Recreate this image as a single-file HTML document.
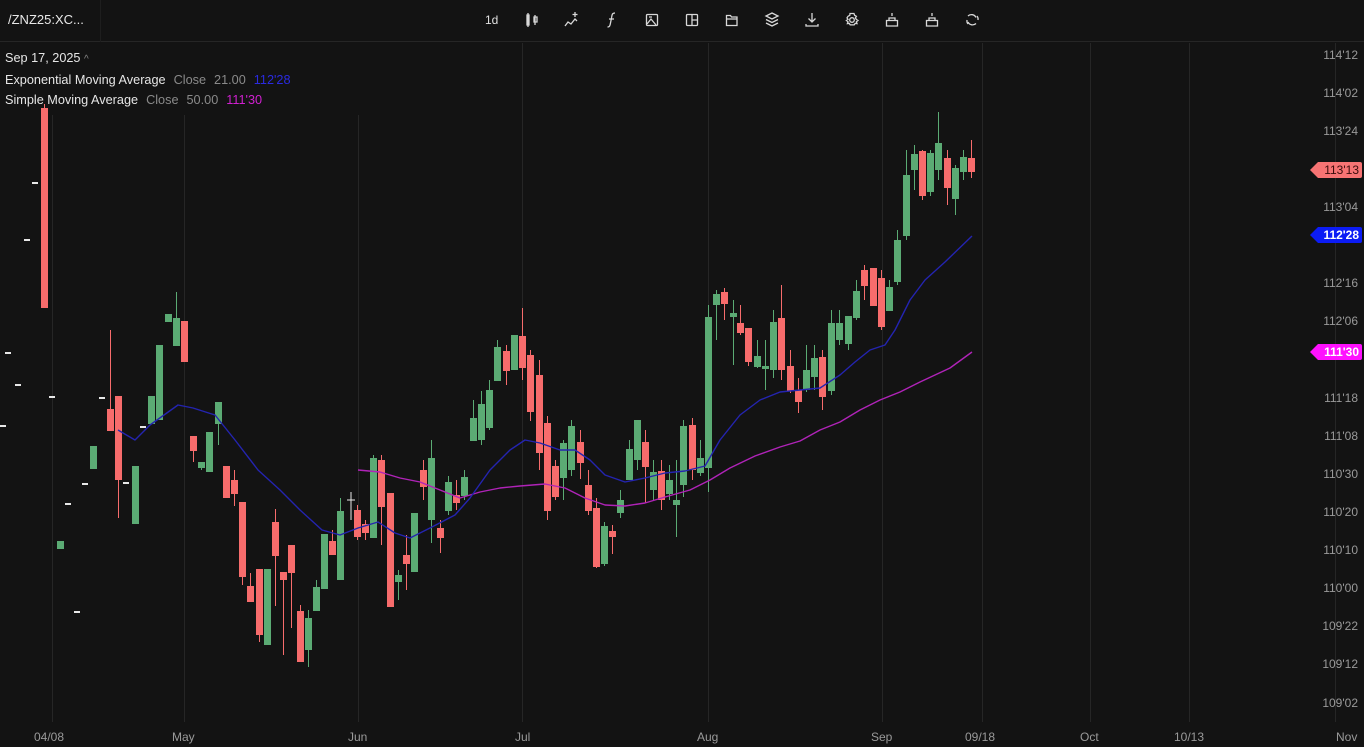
<!DOCTYPE html>
<html><head><meta charset="utf-8"><style>
html,body{margin:0;padding:0;background:#131313;width:1364px;height:747px;overflow:hidden;font-family:"Liberation Sans",sans-serif;}
#hdr{position:absolute;left:0;top:0;width:1364px;height:42px;border-bottom:1px solid #262626;box-sizing:border-box;}
#sym{position:absolute;left:8px;top:12px;color:#e8e8e8;font-size:13px;}
#sep{position:absolute;left:100px;top:0;width:1px;height:42px;background:#1e1e1e}
.lg{position:absolute;left:5px;font-size:12.7px;color:#e6e6e6;white-space:nowrap}
.lg .g{color:#8a8a8a;margin-left:8px}
.ax{position:absolute;font-size:12px;color:#9a9a9a}
.pl{right:6px}
.tag{position:absolute;left:1318px;width:44px;height:16px;font-size:12px;line-height:16px;text-align:right;padding-right:3px;box-sizing:border-box;border-radius:0 2px 2px 0}
</style></head><body>
<div id="hdr"><div id="sym">/ZNZ25:XC...</div><div id="sep"></div>
<svg width="1364" height="42" style="position:absolute;left:0;top:0" fill="none" stroke="#d8d8d8" stroke-width="1.3">
<text x="485" y="24" fill="#e0e0e0" stroke="none" font-size="12" font-family="Liberation Sans">1d</text>
<path d="M528 13v14M527 15h2v10h-2zM535 15v10M534 17h3v5h-3z"/>
<path d="M565 26l3-4 3 2 4-5 2 2M575 12v5M572.5 14.5h5"/>
<path d="M615 13c-3 0-3 2-3.5 5l-1 5c-.5 3-1 4-3 4M609 19h5"/>
<rect x="646.5" y="14.5" width="11" height="11" rx="1"/><path d="M647 24l4-5 5 6M649 17h3"/>
<rect x="686.5" y="14.5" width="11" height="11" rx="1"/><path d="M692 14.5v11M692 20h5.5"/>
<path d="M726.5 15.5h4l1 1.5h5.5v8.5h-10.5zM726.5 19h11"/>
<path d="M772 13l6 3-6 3-6-3zM766 19.5l6 3 6-3M766 23l6 3 6-3"/>
<path d="M812 13v9M808.5 18.5l3.5 3.5 3.5-3.5M806 24v2h12v-2"/>
<circle cx="852" cy="20" r="2.3"/><path d="M850 13.5h4l.6 1.8 1.8 1-1 1.6 1 1.6 1.6 1-1.6 1.3.6 1.8-1.8-.3-1 1.6h-4l-1-1.6-1.8.3.6-1.8-1.6-1.3 1.6-1-1-1.6 1-1.6 1.8-1z"/>
<path d="M886.5 20.5h11v5.5h-11zM889 20.5v-2.5h6v2.5M892 13v3"/>
<path d="M926.5 20.5h11v5.5h-11zM929 20.5v-2.5h6v2.5M932 13v3"/>
<path d="M968 16a5 5 0 0 1 8 1.5M976 23.5a5 5 0 0 1-8-1.5M968 24a5 5 0 0 1-1-4M977 16a5 5 0 0 1 1 4"/>
</svg></div>

<div class="lg" style="top:51px">Sep 17, 2025 <span style="color:#888;font-size:10px">^</span></div>
<div class="lg" style="top:73px">Exponential Moving Average<span class="g">Close</span><span class="g">21.00</span><span style="color:#2a2ae0;margin-left:8px">112'28</span></div>
<div class="lg" style="top:93px">Simple Moving Average<span class="g">Close</span><span class="g">50.00</span><span style="color:#d020d0;margin-left:8px">111'30</span></div>

<svg id="ch" width="1364" height="747" style="position:absolute;left:0;top:0;z-index:-0" ></svg>

<div class="ax pl" style="top:48px">114'12</div>
<div class="ax pl" style="top:86px">114'02</div>
<div class="ax pl" style="top:124px">113'24</div>
<div class="ax pl" style="top:200px">113'04</div>
<div class="ax pl" style="top:276px">112'16</div>
<div class="ax pl" style="top:314px">112'06</div>
<div class="ax pl" style="top:391px">111'18</div>
<div class="ax pl" style="top:429px">111'08</div>
<div class="ax pl" style="top:467px">110'30</div>
<div class="ax pl" style="top:505px">110'20</div>
<div class="ax pl" style="top:543px">110'10</div>
<div class="ax pl" style="top:581px">110'00</div>
<div class="ax pl" style="top:619px">109'22</div>
<div class="ax pl" style="top:657px">109'12</div>
<div class="ax pl" style="top:696px">109'02</div>
<div class="tag" style="top:162px;background:#f77474;color:#3a0c0c">113'13<span style="position:absolute;left:-8px;top:0;width:0;height:0;border-top:8px solid transparent;border-bottom:8px solid transparent;border-right:8px solid #f77474"></span></div>
<div class="tag" style="top:227px;background:#0c1cf5;color:#fff;font-weight:bold">112'28<span style="position:absolute;left:-8px;top:0;width:0;height:0;border-top:8px solid transparent;border-bottom:8px solid transparent;border-right:8px solid #0c1cf5"></span></div>
<div class="tag" style="top:344px;background:#ff10ff;color:#fff;font-weight:bold">111'30<span style="position:absolute;left:-8px;top:0;width:0;height:0;border-top:8px solid transparent;border-bottom:8px solid transparent;border-right:8px solid #ff10ff"></span></div>

<div class="ax" style="top:730px;left:34px">04/08</div>
<div class="ax" style="top:730px;left:172px">May</div>
<div class="ax" style="top:730px;left:348px">Jun</div>
<div class="ax" style="top:730px;left:515px">Jul</div>
<div class="ax" style="top:730px;left:697px">Aug</div>
<div class="ax" style="top:730px;left:871px">Sep</div>
<div class="ax" style="top:730px;left:965px">09/18</div>
<div class="ax" style="top:730px;left:1080px">Oct</div>
<div class="ax" style="top:730px;left:1174px">10/13</div>
<div class="ax" style="top:730px;left:1336px">Nov</div>

<script>
var s='';
var gl=[[52,115],[184,115],[358,115],[522,43],[708,43],[882,43],[982,43],[1090,43],[1189,43],[1335,43]];
gl.forEach(function(g){s+='<line x1="'+(g[0]+.5)+'" y1="'+g[1]+'" x2="'+(g[0]+.5)+'" y2="722" stroke="#262626"/>';});
var G='#5bab74',R='#f76c6c';
var c=[[44,108,308,104,308,R],[60,541,549,541,549,G],[93,446,469,446,469,G],[110,409,431,330,431,R],[118,396,480,396,518,R],[135,466,524,466,524,G],[151,396,424,396,424,G],[159,345,420,345,420,G],[168,314,322,314,322,G],[176,318,346,292,346,G],[184,321,362,321,362,R],[193,436,451,436,462,R],[201,462,468,462,470,G],[209,432,472,432,472,G],[218,402,424,402,445,G],[226,466,498,466,498,R],[234,480,494,470,506,R],[242,502,577,502,585,R],[250,586,602,573,602,R],[259,569,635,569,642,R],[267,569,645,569,645,G],[275,522,556,509,606,R],[283,572,580,572,655,R],[291,545,573,545,628,R],[300,611,662,605,662,R],[308,618,650,610,667,G],[316,587,611,580,611,G],[324,534,589,534,589,G],[332,541,555,530,555,R],[340,511,580,498,580,G],[357,510,537,505,540,R],[365,524,533,520,540,R],[373,458,538,455,538,G],[381,460,507,455,545,R],[390,493,607,493,607,R],[398,575,582,570,600,G],[406,555,564,535,590,R],[414,513,572,513,572,G],[423,470,487,460,500,R],[431,458,520,440,543,G],[440,528,538,520,553,R],[448,482,511,476,515,G],[456,495,503,480,510,R],[464,477,496,470,500,G],[473,418,441,400,441,G],[481,404,440,391,445,G],[489,390,428,380,430,G],[497,347,381,340,381,G],[506,351,371,345,385,R],[514,335,370,335,370,G],[522,336,368,308,380,R],[530,355,412,350,421,R],[539,375,453,360,470,R],[547,423,511,416,520,R],[555,466,497,460,500,R],[563,443,478,440,500,G],[571,426,470,420,476,G],[580,442,463,430,479,R],[588,485,511,470,515,R],[596,508,567,498,568,R],[604,526,564,522,566,G],[612,531,537,525,554,R],[620,500,513,490,518,G],[629,449,480,440,480,G],[637,420,460,420,470,G],[645,442,467,430,503,R],[653,472,490,460,500,G],[661,471,500,460,510,R],[669,480,494,465,500,G],[676,500,505,460,537,G],[683,426,485,420,497,G],[692,425,470,418,480,R],[700,458,473,440,476,G],[708,317,468,305,492,G],[716,294,305,290,340,G],[724,292,304,288,320,R],[733,313,317,300,365,G],[740,323,333,305,335,R],[748,328,362,328,366,R],[757,356,367,340,368,G],[765,366,369,340,390,G],[773,322,370,310,378,G],[781,318,370,285,380,R],[790,366,391,350,393,R],[798,390,402,378,413,R],[806,370,390,345,392,G],[814,358,377,345,390,G],[822,357,397,350,410,R],[831,323,391,310,395,G],[839,323,340,310,345,G],[848,316,344,316,350,G],[856,291,318,280,320,G],[864,270,286,265,300,R],[873,268,306,268,306,R],[881,278,327,270,330,R],[889,287,311,280,311,G],[897,240,282,230,285,G],[906,175,236,150,240,G],[914,154,170,145,190,G],[922,151,196,150,200,R],[930,153,192,150,196,G],[938,143,170,112,180,G],[947,158,188,150,205,R],[955,168,199,165,215,G],[963,157,172,150,180,G],[971,158,172,140,178,R]];
c.forEach(function(k){s+='<line x1="'+(k[0]+.5)+'" y1="'+k[3]+'" x2="'+(k[0]+.5)+'" y2="'+k[4]+'" stroke="'+k[5]+'"/>';s+='<rect x="'+(k[0]-3)+'" y="'+k[1]+'" width="7" height="'+Math.max(2,k[2]-k[1])+'" fill="'+k[5]+'"/>';});
var d=[[8,352],[18,384],[35,182],[27,239],[3,425],[52,396],[68,503],[77,611],[85,483],[102,397],[126,482],[143,426]];
d.forEach(function(k){s+='<rect x="'+(k[0]-3)+'" y="'+k[1]+'" width="6" height="2" fill="#e8e8e8"/>';});
s+='<path d="M351 492v28M347 500h8" stroke="#e8e8e8"/>';
var e=[[118,430],[135,440],[150,425],[178,405],[193,408],[215,415],[235,440],[258,470],[280,490],[300,510],[322,530],[340,535],[358,528],[378,522],[395,533],[410,538],[430,528],[455,515],[470,498],[490,470],[510,450],[525,440],[540,443],[560,450],[575,450],[590,460],[605,475],[625,482],[645,478],[665,473],[685,471],[705,466],[720,440],[740,415],[760,400],[780,392],[800,390],[820,388],[840,375],[855,362],[870,350],[885,345],[895,330],[910,300],[925,280],[945,262],[972,236]];
var m=[[358,470],[380,472],[400,478],[420,482],[440,490],[460,498],[480,492],[500,488],[520,486],[545,484],[565,488],[585,498],[605,505],[625,506],[645,503],[665,497],[690,490],[710,480],[730,468],[755,456],[780,447],[800,441],[820,430],[840,422],[860,410],[880,400],[900,392],[920,382],[950,368],[972,352]];
function pl(a,col){return '<polyline fill="none" stroke="'+col+'" stroke-width="1.4" stroke-linejoin="round" points="'+a.map(function(p){return p.join(',')}).join(' ')+'"/>';}
s+=pl(m,'#b023b8')+pl(e,'#2424b0');
document.getElementById('ch').innerHTML=s;
</script>
</body></html>
